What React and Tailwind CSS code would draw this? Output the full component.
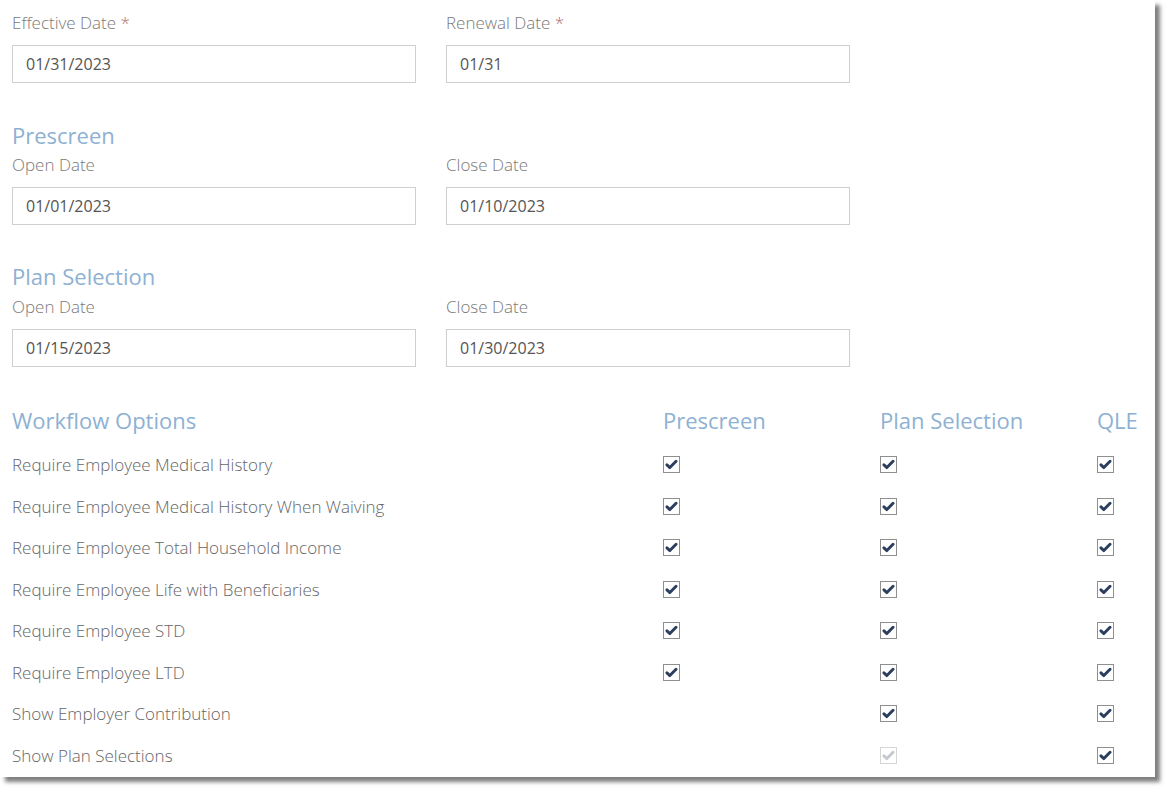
import React from 'react';

const font = { fontFamily: '"Open Sans", "Liberation Sans", sans-serif' };

const Check = ({ disabled }) => (
  <span
    className={`flex h-[17px] w-[17px] items-center justify-center border bg-white ${
      disabled ? 'border-[#d6d6d6]' : 'border-[#8f8f8f]'
    }`}
  >
    <svg viewBox="0 0 16 16" className="h-[13px] w-[13px]">
      <path
        d="M2.4 8.4 L6 11.8 L13.6 4"
        fill="none"
        stroke={disabled ? '#c4c9d0' : '#2c3e5e'}
        strokeWidth="3.6"
        strokeLinecap="round"
        strokeLinejoin="round"
      />
    </svg>
  </span>
);

const Field = ({ label, value, required }) => (
  <div className="w-[404px]">
    <div className="h-[22px] text-[17px] leading-[24px] font-light text-[#7a7a7a]">
      {label}
      {required && <span className="text-[#b0706a]"> *</span>}
    </div>
    <div className="mt-[12px] flex h-[38px] items-center border border-[#cfcfcf] bg-white px-[13px] text-[16px] text-[#555]">
      {value}
    </div>
  </div>
);

const Heading = ({ children, className = '' }) => (
  <div className={`h-[30px] text-[22px] leading-[30px] text-[#8eb1d3] ${className}`}>{children}</div>
);

const rows = [
  ['Require Employee Medical History', 1, 1, 1],
  ['Require Employee Medical History When Waiving', 1, 1, 1],
  ['Require Employee Total Household Income', 1, 1, 1],
  ['Require Employee Life with Beneficiaries', 1, 1, 1],
  ['Require Employee STD', 1, 1, 1],
  ['Require Employee LTD', 1, 1, 1],
  ['Show Employer Contribution', 0, 1, 1],
  ['Show Plan Selections', 0, 2, 1],
];

const cell = (v) => (v === 0 ? null : <Check disabled={v === 2} />);

export default function App() {
  return (
    <div className="min-h-[792px] bg-white" style={font}>
      <div className="w-[1155px] h-[777px] bg-white pl-[12px] pt-[11px] shadow-[5px_5px_4px_rgba(0,0,0,0.5)]">
        <div className="flex gap-[30px]">
          <Field label="Effective Date" value="01/31/2023" required />
          <Field label="Renewal Date" value="01/31" required />
        </div>

        <Heading className="mt-[37px]">Prescreen</Heading>
        <div className="mt-[3px] flex gap-[30px]">
          <Field label="Open Date" value="01/01/2023" />
          <Field label="Close Date" value="01/10/2023" />
        </div>

        <Heading className="mt-[36px]">Plan Selection</Heading>
        <div className="mt-[4px] flex gap-[30px]">
          <Field label="Open Date" value="01/15/2023" />
          <Field label="Close Date" value="01/30/2023" />
        </div>

        <div className="mt-[38px] grid grid-cols-[651px_217px_217px_1fr]">
          <Heading>Workflow Options</Heading>
          <Heading>Prescreen</Heading>
          <Heading>Plan Selection</Heading>
          <Heading>QLE</Heading>
        </div>
        <div className="mt-[9px]">
          {rows.map(([label, a, b, c]) => (
            <div key={label} className="grid h-[41.5px] grid-cols-[651px_217px_217px_1fr] items-center">
              <div className="text-[17px] font-light text-[#666]">{label}</div>
              <div>{cell(a)}</div>
              <div>{cell(b)}</div>
              <div>{cell(c)}</div>
            </div>
          ))}
        </div>
      </div>
    </div>
  );
}
